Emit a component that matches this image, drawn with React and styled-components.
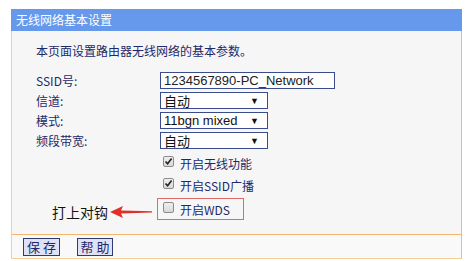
import React from "react";
import styled, { createGlobalStyle } from "styled-components";

const Global = createGlobalStyle`
  html, body {
    margin: 0;
    background: #ffffff;
  }
  body {
    font-family: "Noto Sans CJK SC", "Liberation Sans", sans-serif;
    font-size: 12px;
  }
`;

const Panel = styled.div`
  margin: 9px 0 0 11px;
  width: 451px;
  border: 1px solid #f0cf9a;
  border-top: none;
  border-right-color: #f2bb7c;
  box-sizing: border-box;
`;

const TitleBar = styled.div`
  height: 22px;
  line-height: 22px;
  background: #6698ec;
  color: #ffffff;
  padding-left: 5px;
  font-size: 12px;
  margin: 0 -1px;
`;

const Body = styled.div`
  background: #f6f6f6;
  padding: 11px 0 14px 24px;
`;

const Intro = styled.div`
  color: #1c2a6a;
  height: 17px;
  line-height: 17px;
  margin-bottom: 13px;
`;

const Form = styled.div`
  display: grid;
  grid-template-columns: 124px auto;
  row-gap: 3px;
  align-items: center;
`;

const Label = styled.div`
  color: #1c2a6a;
  line-height: 16px;
`;

const TextBox = styled.div`
  width: 175px;
  height: 17px;
  border: 1px solid #3b4c8c;
  background: #ffffff;
  box-sizing: border-box;
  font-family: "Liberation Sans", Arial, sans-serif;
  font-size: 13px;
  color: #222;
  line-height: 15px;
  padding-left: 3px;
`;

const Select = styled.div`
  width: 108px;
  height: 17px;
  border: 1px solid #3b4c8c;
  background: #ffffff;
  box-sizing: border-box;
  display: flex;
  align-items: center;
  justify-content: space-between;
  padding: 0 8px 0 3px;
  font-family: "Liberation Sans", "Noto Sans CJK SC", sans-serif;
  font-size: 13px;
  color: #111;
  span:last-child {
    font-size: 9px;
  }
`;

const Checks = styled.div`
  grid-column: 2;
  display: flex;
  flex-direction: column;
  margin: 0 0 -1px;
`;

const CheckRow = styled.div`
  display: flex;
  align-items: center;
  gap: 6px;
  height: 22px;
  padding-left: 5px;
  color: #1c2a6a;
  white-space: nowrap;
  width: ${(p) => (p.$marked ? "87px" : "auto")};
  box-sizing: border-box;
  border: 1px solid ${(p) => (p.$marked ? "#e06a6a" : "transparent")};
  margin-left: -3px;
`;

const Box = styled.span`
  width: 11px;
  height: 11px;
  border: 1px solid #8c8c8c;
  border-radius: 2px;
  background: linear-gradient(#f0f0f0, #d8d8d8);
  display: flex;
  align-items: center;
  justify-content: center;
  box-sizing: border-box;
  margin-top: -3px;
`;

const Note = styled.div`
  grid-column: 1;
  display: flex;
  align-items: center;
  gap: 2px;
  height: 22px;
  line-height: 20px;
  padding: 6px 0 0 16px;
  box-sizing: border-box;
  font-size: 14px;
  color: #111;
  white-space: nowrap;
`;

const Footer = styled.div`
  border-top: 1px solid #f4b46c;
  background: #f9f9f9;
  height: 23px;
  display: flex;
  align-items: center;
  gap: 17px;
  padding-left: 11px;
`;

const Button = styled.div`
  height: 18px;
  width: ${(p) => p.$w}px;
  border: 1px solid #2e3a70;
  background: #dfe2f6;
  color: #1c2a6a;
  font-size: 13px;
  line-height: 16px;
  box-sizing: border-box;
  display: flex;
  align-items: center;
  justify-content: center;
  white-space: nowrap;
  letter-spacing: 3px;
  padding-left: 3px;
`;

const Check = ({ on }) => (
  <Box>
    {on && (
      <svg width="9" height="9" viewBox="0 0 9 9">
        <path d="M1.5 4.5 L3.6 6.8 L7.6 1.5" stroke="#222" strokeWidth="1.6" fill="none" />
      </svg>
    )}
  </Box>
);

const Arrow = () => (
  <svg width="42" height="14" viewBox="0 0 42 14">
    <path d="M0 7 L13 1 L11 5.5 L42 6.3 L42 7.5 L11 8.6 L13 13 Z" fill="#e0302a" />
  </svg>
);

export default function App() {
  return (
    <>
      <Global />
      <Panel>
        <TitleBar>无线网络基本设置</TitleBar>
        <Body>
          <Intro>本页面设置路由器无线网络的基本参数。</Intro>
          <Form>
            <Label>SSID号:</Label>
            <TextBox>1234567890-PC_Network</TextBox>
            <Label>信道:</Label>
            <Select>
              <span>自动</span>
              <span>▼</span>
            </Select>
            <Label>模式:</Label>
            <Select>
              <span>11bgn mixed</span>
              <span>▼</span>
            </Select>
            <Label>频段带宽:</Label>
            <Select>
              <span>自动</span>
              <span>▼</span>
            </Select>
            <Checks>
              <CheckRow>
                <Check on />
                开启无线功能
              </CheckRow>
              <CheckRow>
                <Check on />
                开启SSID广播
              </CheckRow>
            </Checks>
            <Note>
              打上对钩
              <Arrow />
            </Note>
            <CheckRow $marked>
              <Check />
              开启WDS
            </CheckRow>
          </Form>
        </Body>
        <Footer>
          <Button $w={37}>保存</Button>
          <Button $w={36}>帮助</Button>
        </Footer>
      </Panel>
    </>
  );
}
